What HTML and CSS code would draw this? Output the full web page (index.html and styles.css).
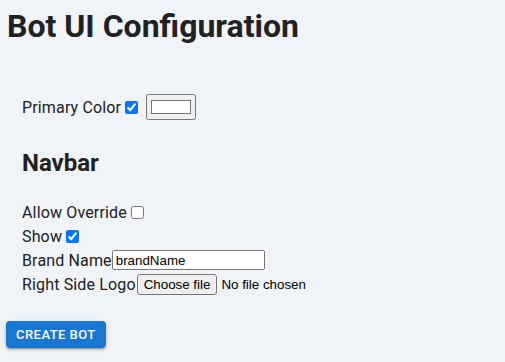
FILE: index.html
```html
<!DOCTYPE html>
<html lang="en">
<head>
  <meta charset="UTF-8" />
  <meta name="viewport" content="width=device-width, initial-scale=1.0"/>
  <title>Bot UI Configuration</title>
  <link rel="stylesheet" href="styles.css">
</head>
<body>

<h1 class="page-title">Bot UI Configuration</h1>

<form class="config-form" id="configForm">
  <div class="config-section">
    <div class="field-row">
      <label for="primaryColorOn">Primary Color</label>
      <input type="checkbox" id="primaryColorOn" checked>
      <input type="color" id="primaryColor" class="color-input" value="#ffffff">
    </div>

    <h2 class="section-title">Navbar</h2>

    <div class="field-row">
      <label for="allowOverride">Allow Override</label>
      <input type="checkbox" id="allowOverride">
    </div>
    <div class="field-row">
      <label for="navShow">Show</label>
      <input type="checkbox" id="navShow" checked>
    </div>
    <div class="field-row">
      <label for="brandName">Brand Name</label><input type="text" id="brandName" class="text-input" value="brandName">
    </div>
    <div class="field-row">
      <label for="rightLogo">Right Side Logo</label>
      <input type="file" id="rightLogo" class="file-hidden">
      <label for="rightLogo" class="file-button">Choose file</label>
      <span class="file-name">No file chosen</span>
    </div>
  </div>

  <button type="submit" class="create-button">Create Bot</button>
</form>

</body>
</html>
```

FILE: styles.css
```css
* {
  box-sizing: border-box;
}

body {
  margin: 0;
  padding: 8px 6px;
  font-family: Roboto, 'Noto Sans', sans-serif;
  background: #f0f3f8;
  color: #212121;
  font-size: 16px;
  letter-spacing: 0.15px;
}

.page-title {
  font-size: 32px;
  font-weight: bold;
  margin: 0 0 0 1px;
  line-height: 37px;
  letter-spacing: 0;
}

.config-section {
  padding: 50px 16px 0;
}

.field-row {
  display: flex;
  align-items: center;
  height: 24px;
}

.field-row input[type="checkbox"] {
  margin: 0 3px 0 4px;
  width: 13px;
  height: 13px;
}

.color-input {
  width: 50px;
  height: 26px;
  margin-left: 5px;
}

.section-title {
  font-size: 24px;
  font-weight: bold;
  margin: 30px 0 23px;
  line-height: 28px;
  letter-spacing: 0;
}

.text-input {
  width: 153px;
  height: 20px;
  font-size: 13.33px;
  font-family: Arial, 'Liberation Sans', sans-serif;
  letter-spacing: 0;
}

.file-hidden {
  display: none;
}

.file-button {
  margin-left: 1px;
  height: 21px;
  padding: 1px 6px;
  background: #efefef;
  border: 1px solid #767676;
  border-radius: 3px;
  color: #000;
  font-size: 13.33px;
  font-family: Arial, 'Liberation Sans', sans-serif;
  letter-spacing: 0;
  line-height: 17px;
}

.file-name {
  margin-left: 4px;
  color: #000;
  font-size: 13.33px;
  font-family: Arial, 'Liberation Sans', sans-serif;
  letter-spacing: 0;
}

.create-button {
  margin-top: 25px;
  background: #1976d2;
  color: white;
  border: none;
  border-radius: 4px;
  padding: 4px 10px;
  font-family: Roboto, sans-serif;
  font-size: 13px;
  font-weight: 500;
  letter-spacing: 0.46px;
  text-transform: uppercase;
  line-height: 19px;
  height: 27px;
  box-shadow: 0 3px 1px -2px rgba(0, 0, 0, 0.2), 0 2px 2px rgba(0, 0, 0, 0.14), 0 1px 5px rgba(0, 0, 0, 0.12);
  cursor: pointer;
}
```
